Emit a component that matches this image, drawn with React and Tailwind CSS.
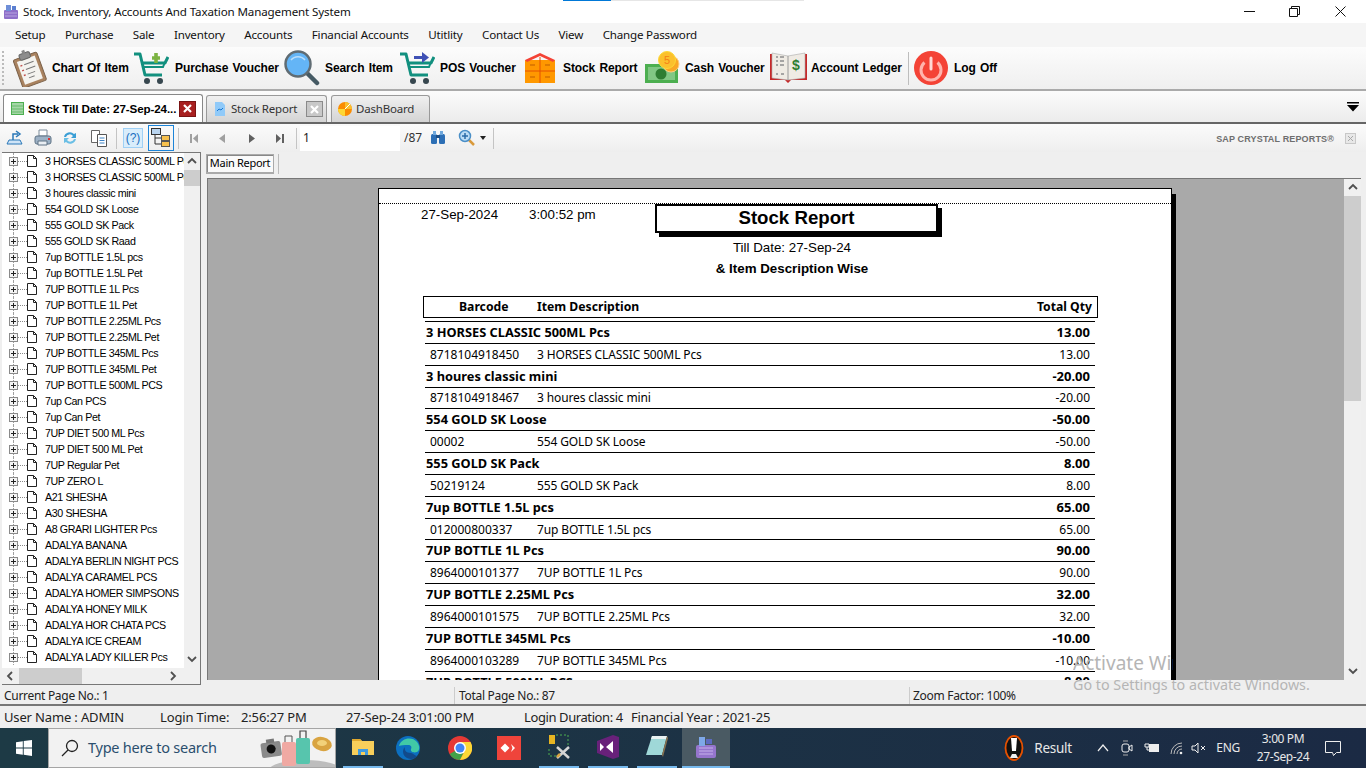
import React from "react";

const Clipboard = () => (
  <svg width="40" height="38" viewBox="0 0 40 38" className="shrink-0">
    <g transform="rotate(-20 20 20)">
      <rect x="7" y="6" width="25" height="30" rx="2" fill="#a9825f" stroke="#7a6048" />
      <rect x="10" y="9" width="19" height="24" fill="#f4f3ef" />
      <rect x="14" y="3" width="11" height="6" rx="1.5" fill="#8d8d8d" stroke="#666" />
      <rect x="18" y="0" width="3" height="4" fill="#888" />
      <path d="M12 14h2M12 19h2M12 24h2" stroke="#c0504d" strokeWidth="1.4" />
      <path d="M16 14h10M16 19h10M16 24h8M16 28h6" stroke="#777" />
    </g>
  </svg>
);
const Cart = ({ kind }) => (
  <svg width="36" height="34" viewBox="0 0 36 34" className="shrink-0">
    <path d="M1 3h6l5 21h17M10 12h22l3-6" fill="none" stroke="#12907f" strokeWidth="3" strokeLinejoin="round" />
    <path d="M9 16h21l2-5" fill="none" stroke="#12907f" strokeWidth="2" />
    <circle cx="14" cy="30" r="3" fill="#37474f" />
    <circle cx="27" cy="30" r="3" fill="#37474f" />
    {kind === "plus" ? (
      <path d="M19 7h8M23 2v10" stroke="#7cb342" strokeWidth="3.6" />
    ) : (
      <g fill="#3f51b5">
        <rect x="15" y="5" width="9" height="3" />
        <path d="M23 1l7 5.500-7 5.500z" />
      </g>
    )}
  </svg>
);
const Magnifier = () => (
  <svg width="36" height="36" viewBox="0 0 36 36" className="shrink-0">
    <path d="M22 22l11 11" stroke="#455a64" strokeWidth="4.500" strokeLinecap="round" />
    <circle cx="14" cy="14" r="12.500" fill="#64b5f6" stroke="#606c73" strokeWidth="2.500" />
    <path d="M7 10a9 9 0 0 1 14 0" fill="none" stroke="#bbdefb" strokeWidth="1.500" />
  </svg>
);
const Box = () => (
  <svg width="30" height="30" viewBox="0 0 30 30" className="shrink-0">
    <rect x="0" y="7" width="30" height="23" fill="#ff9800" />
    <path d="M0 7l15-7 15 7-2 2-13-6L2 9z" fill="#f44336" />
    <path d="M15 4v26M0 18h30" stroke="#e65100" />
    <path d="M5 12h5M20 12h5M5 24h5M20 24h5" stroke="#bf5f00" strokeWidth="1.200" />
  </svg>
);
const Money = () => (
  <svg width="36" height="34" viewBox="0 0 36 34" className="shrink-0">
    <rect x="1" y="13" width="33" height="19" fill="#4caf50" />
    <rect x="4" y="16" width="27" height="13" fill="#81c784" />
    <circle cx="17" cy="23" r="5.500" fill="#2e7d32" />
    <circle cx="27" cy="13" r="8" fill="#f9a825" stroke="#ffcc80" />
    <circle cx="23" cy="9" r="8.500" fill="#fbc02d" stroke="#fdd835" />
    <text x="23" y="13" textAnchor="middle" fontSize="11" fontFamily="Liberation Sans" fill="#f57f17">5</text>
  </svg>
);
const Ledger = () => (
  <svg width="37" height="32" viewBox="0 0 37 32" className="shrink-0">
    <path d="M0 2v26h15l3 3 3-3h16V2h-2v24H2V2z" fill="#c62828" />
    <path d="M2 1l16 3 17-3v25l-17 2-16-2z" fill="#efebe4" stroke="#aaa" strokeWidth=".6" />
    <path d="M18 4v24" stroke="#999" />
    <path d="M6 5h2M6 9h2M6 13h2M6 22h2M10 5h4M10 9h4M10 13h4M11 22h3" stroke="#8d8d8d" strokeWidth="1.400" />
    <text x="26" y="18" textAnchor="middle" fontSize="14" fontWeight="700" fontFamily="Liberation Sans" fill="#2e7d32">$</text>
  </svg>
);
const Power = () => (
  <svg width="34" height="34" viewBox="0 0 34 34" className="shrink-0">
    <circle cx="17" cy="17" r="17" fill="#f44336" />
    <path d="M10.500 11.500a10 10 0 1 0 13 0" fill="none" stroke="#ffb4ad" strokeWidth="3" />
    <path d="M17 7v11" stroke="#ffd8d4" strokeWidth="3" strokeLinecap="round" />
  </svg>
);

const Tool = ({ children, label, cls }) => (
  <div className={`flex items-center ${cls}`}>
    {children}
    <span className="font-bold text-[12px] text-black whitespace-nowrap [word-spacing:1px] tracking-[-0.1px]">{label}</span>
  </div>
);

const DocIcon = () => (
  <svg width="10" height="12" viewBox="0 0 10 12" className="shrink-0">
    <path d="M.5.500h6l3 3v8h-9zM6.500.500v3h3" fill="#fff" stroke="#222" />
  </svg>
);

const PlusBox = () => (
  <svg width="9" height="9" viewBox="0 0 9 9" className="shrink-0">
    <rect x=".5" y=".5" width="8" height="8" fill="#f4f4f4" stroke="#8a8a8a" />
    <path d="M2 4.500h5M4.500 2v5" stroke="#222" />
  </svg>
);

const names = [
  "3 HORSES CLASSIC 500ML Pcs","3 HORSES CLASSIC 500ML Pcs","3 houres classic mini","554 GOLD SK Loose","555 GOLD SK Pack","555 GOLD SK Raad",
  "7up BOTTLE 1.5L pcs","7up BOTTLE 1.5L Pet","7UP BOTTLE 1L Pcs","7UP BOTTLE 1L Pet","7UP BOTTLE 2.25ML Pcs","7UP BOTTLE 2.25ML Pet",
  "7UP BOTTLE 345ML Pcs","7UP BOTTLE 345ML Pet","7UP BOTTLE 500ML PCS","7up Can PCS","7up Can Pet","7UP DIET 500 ML Pcs","7UP DIET 500 ML Pet",
  "7UP Regular Pet","7UP ZERO L","A21 SHESHA","A30 SHESHA","A8 GRARI LIGHTER Pcs","ADALYA BANANA","ADALYA BERLIN NIGHT PCS","ADALYA CARAMEL PCS",
  "ADALYA HOMER SIMPSONS","ADALYA HONEY MILK","ADALYA HOR CHATA PCS","ADALYA ICE CREAM","ADALYA LADY KILLER Pcs",
];

const rows = [
  ["3 HORSES CLASSIC 500ML Pcs","13.00","8718104918450"],
  ["3 houres classic mini","-20.00","8718104918467"],
  ["554 GOLD SK Loose","-50.00","00002"],
  ["555 GOLD SK Pack","8.00","50219124"],
  ["7up BOTTLE 1.5L pcs","65.00","012000800337"],
  ["7UP BOTTLE 1L Pcs","90.00","8964000101377"],
  ["7UP BOTTLE 2.25ML Pcs","32.00","8964000101575"],
  ["7UP BOTTLE 345ML Pcs","-10.00","8964000103289"],
  ["7UP BOTTLE 500ML PCS","8.00","8964000103500"],
];

const Chevron = ({ dir, cls = "" }) => {
  const d = { up: "M1 6l4-4 4 4", down: "M1 2l4 4 4-4", left: "M6 1L2 5l4 4", right: "M2 1l4 4-4 4" }[dir];
  return (
    <svg width="10" height="10" viewBox="0 0 10 10" className={`shrink-0 ${cls}`}>
      <path d={d} fill="none" stroke="#505050" strokeWidth="1.800" />
    </svg>
  );
};

const Sep = ({ cls = "" }) => <div className={`w-px h-[21px] bg-[#c4c4c4] shrink-0 ${cls}`} />;

const CrystalToolbar = () => (
  <div className="h-[28px] shrink-0 flex items-center bg-gradient-to-b from-[#fbfbfb] to-[#eeeeee] text-[12px]">
    <svg width="18" height="18" viewBox="0 0 18 18" className="ml-[6px] shrink-0">
      <path d="M1 15h15l-2-4H3z" fill="#cfe4f7" stroke="#2a78b8" />
      <path d="M7 11V5h5M10 2l4 3-4 3" fill="none" stroke="#2a78b8" strokeWidth="1.500" />
    </svg>
    <svg width="18" height="18" viewBox="0 0 18 18" className="ml-[10px] shrink-0">
      <path d="M5 1h8v6H5z" fill="#fff" stroke="#7a8a99" />
      <rect x="1" y="7" width="16" height="8" rx="2" fill="#9db1c5" stroke="#5f7385" />
      <path d="M4 12h9v4H4z" fill="#e9eef3" stroke="#5f7385" />
      <rect x="14" y="9" width="2" height="2" fill="#d33" />
    </svg>
    <svg width="16" height="16" viewBox="0 0 16 16" className="ml-[10px] shrink-0">
      <path d="M2 7a6 6 0 0 1 10-3l2-1v5H9l2-2a4 4 0 0 0-7 1z" fill="#3b9fd6" />
      <path d="M14 9a6 6 0 0 1-10 3l-2 1V8h5L5 10a4 4 0 0 0 7-1z" fill="#6bbfe5" />
    </svg>
    <svg width="18" height="18" viewBox="0 0 18 18" className="ml-[12px] shrink-0">
      <path d="M1.500 1.500h8v12h-8z" fill="#fff" stroke="#666" />
      <path d="M7.500 5.500h9v12h-9z" fill="#fff" stroke="#555" />
      <path d="M9.500 9h5M9.500 11.500h5M9.500 14h5" stroke="#3d82c4" />
    </svg>
    <Sep cls="ml-[8px]" />
    <div className="ml-[6px] w-[20px] h-[20px] border border-[#9fd0f5] bg-[#d9edfb] flex items-center justify-center text-[12px] text-[#1a6fc0] shrink-0 [font-family:'Liberation_Sans',sans-serif]">(?)</div>
    <div className="ml-[5px] w-[26px] h-[26px] border border-[#1c84d8] flex items-center justify-center shrink-0">
      <svg width="20" height="20" viewBox="0 0 20 20">
        <rect x=".5" y=".5" width="9" height="6" fill="#b9d4ef" stroke="#333" />
        <path d="M4 7v9h6M4 10h6" fill="none" stroke="#333" />
        <rect x="10.500" y="7.500" width="8" height="5" fill="#f6c04d" stroke="#555" />
        <rect x="10.500" y="13.500" width="8" height="5" fill="#f6c04d" stroke="#555" />
      </svg>
    </div>
    <Sep cls="ml-[4px]" />
    <svg width="10" height="11" viewBox="0 0 10 11" className="ml-[10px] shrink-0"><path d="M1 1h2v9H1zM9 1v9L4 5.500z" fill="#a0a0a0" /></svg>
    <svg width="6" height="11" viewBox="0 0 6 11" className="ml-[20px] shrink-0"><path d="M6 1v9L0 5.500z" fill="#a0a0a0" /></svg>
    <svg width="6" height="11" viewBox="0 0 6 11" className="ml-[24px] shrink-0"><path d="M0 1v9l6-4.500z" fill="#606060" /></svg>
    <svg width="8" height="11" viewBox="0 0 8 11" className="ml-[21px] shrink-0"><path d="M0 1v9l5-4.500zM6 1h2v9H6z" fill="#606060" /></svg>
    <Sep cls="ml-[12px]" />
    <div className="ml-[3px] w-[100px] h-[25px] bg-white flex items-center pl-[3px] text-[#222] shrink-0">1</div>
    <span className="ml-[4px] text-[#333] text-[12px]">/87</span>
    <svg width="16" height="14" viewBox="0 0 16 14" className="ml-[8px] shrink-0">
      <rect x="1" y="3" width="6" height="10" rx="1.500" fill="#2d6fb5" />
      <rect x="9" y="3" width="6" height="10" rx="1.500" fill="#2d6fb5" />
      <rect x="3" y="0" width="3" height="4" fill="#6fa8dc" />
      <rect x="10" y="0" width="3" height="4" fill="#6fa8dc" />
      <rect x="6" y="4" width="4" height="3" fill="#1c4f87" />
    </svg>
    <svg width="18" height="18" viewBox="0 0 18 18" className="ml-[12px] shrink-0">
      <path d="M10 10l6 6" stroke="#d99a3c" strokeWidth="2.500" />
      <circle cx="7" cy="7" r="5.500" fill="#bcdcf5" stroke="#4a8fc7" strokeWidth="1.500" />
      <path d="M4 7h6M7 4v6" stroke="#2b6ca8" strokeWidth="1.500" />
    </svg>
    <svg width="6" height="4" viewBox="0 0 6 4" className="ml-[4px] shrink-0"><path d="M0 0h6L3 4z" fill="#222" /></svg>
    <Sep cls="ml-[7px]" />
    <div className="ml-auto flex items-center">
      <span className="mt-[3px] text-[9px] font-bold text-[#6e6e6e] tracking-[0.15px] whitespace-nowrap [font-family:'Liberation_Sans',sans-serif]">SAP CRYSTAL REPORTS®</span>
      <div className="ml-[11px] mr-[10px] w-[11px] h-[11px] border border-[#c8c8c8] bg-[#e8e8e8] flex items-center justify-center">
        <svg width="7" height="7" viewBox="0 0 7 7"><path d="M1 1l5 5M6 1L1 6" stroke="#a8a8a8" /></svg>
      </div>
    </div>
  </div>
);

const TreeRow = ({ name }) => (
  <div className="h-[16px] flex items-center pl-[7px] relative whitespace-nowrap">
    <span className="absolute left-[11px] top-0 bottom-0 border-l border-dotted border-[#a0a0a0]" />
    <span className="relative flex items-center">
      <PlusBox />
      <span className="w-[9px] border-t border-dotted border-[#888]" />
      <DocIcon />
    </span>
    <span className="ml-[8px] text-[10.7px] text-black tracking-[-0.4px]">{name}</span>
  </div>
);

const Tree = () => (
  <div className="w-[199px] ml-[2px] h-[533px] shrink-0 border-r border-b border-t border-[#777] flex flex-col bg-white [font-family:'Liberation_Sans',sans-serif]">
    <div className="flex-1 flex min-h-0">
      <div className="flex-1 overflow-hidden min-w-0">{names.map((n, i) => <TreeRow key={i} name={n} />)}</div>
      <div className="w-[16px] bg-[#f0f0f0] flex flex-col items-center shrink-0">
        <div className="h-[17px] flex items-center justify-center"><Chevron dir="up" /></div>
        <div className="h-[16px] w-full bg-[#cdcdcd]" />
        <div className="flex-1" />
        <div className="h-[17px] flex items-center justify-center"><Chevron dir="down" /></div>
      </div>
    </div>
    <div className="h-[16px] bg-[#f0f0f0] flex items-center shrink-0">
      <div className="w-[17px] flex justify-center"><Chevron dir="left" /></div>
      <div className="w-[63px] h-full bg-[#cdcdcd]" />
      <div className="flex-1" />
      <div className="w-[32px] flex justify-start pl-[1px]"><Chevron dir="right" /></div>
    </div>
  </div>
);

const Report = () => (
  <div className="ml-[170px] mt-[9px] w-[794px] shrink-0 relative bg-white border-t border-l border-r border-black">
    <div className="absolute -right-[5px] top-[5px] bottom-0 w-[4px] bg-black" />
    <div className="h-[15px] border-b border-dotted border-black" />
    <div className="flex items-start pl-[42px] text-[13.33px] text-black leading-[18px] [font-family:'Liberation_Sans',sans-serif]">
      <span className="mt-[2px] w-[108px]">27-Sep-2024</span>
      <span className="mt-[2px] w-[126px]">3:00:52 pm</span>
      <div className="w-[283px] h-[29px] border-2 border-black shadow-[4px_4px_0_#000] bg-white flex items-center justify-center text-[18.67px] font-bold leading-none">Stock Report</div>
    </div>
    <div className="text-center pl-[34px] mt-[6px] text-[13.33px] leading-[18px] [font-family:'Liberation_Sans',sans-serif]">Till Date: 27-Sep-24</div>
    <div className="text-center pl-[34px] mt-[3px] text-[13.33px] leading-[18px] font-bold [font-family:'Liberation_Sans',sans-serif]">&amp; Item Description Wise</div>
    <div className="ml-[44px] w-[675px] mt-[18px] h-[22px] pt-[1px] border border-black flex items-center text-[12.2px] font-bold [font-family:'Noto_Sans',sans-serif] text-black">
      <span className="ml-[35px] w-[78px]">Barcode</span>
      <span>Item Description</span>
      <span className="ml-auto mr-[5px]">Total Qty</span>
    </div>
    <div className="ml-[46px] w-[670px] mt-[3px] [font-family:'Noto_Sans',sans-serif] text-black">
      {rows.map((r, i) => (
        <React.Fragment key={i}>
          <div className="h-[21.85px] border-t border-black flex items-center text-[12.8px] font-bold leading-none">
            <span className="ml-[1px]">{r[0]}</span>
            <span className="ml-auto mr-[5px] text-[13px]">{r[1]}</span>
          </div>
          <div className="h-[21.85px] pt-[1px] border-t border-black flex items-center text-[12px] leading-none">
            <span className="ml-[5px] w-[107px]">{r[2]}</span>
            <span className="tracking-[-0.12px]">{r[0]}</span>
            <span className="ml-auto mr-[5px]">{r[1]}</span>
          </div>
        </React.Fragment>
      ))}
    </div>
  </div>
);

const Viewer = () => (
  <div className="flex-1 min-w-0 flex flex-col ml-[6px] mr-[5px]">
    <div className="h-[26px] shrink-0 flex items-start pt-[2px] -ml-[1px]">
      <div className="h-[20px] w-[68px] border border-[#aaa] border-b-2 bg-[#fafafa] text-[11px] text-black flex items-center justify-center whitespace-nowrap [font-family:'Noto_Sans',sans-serif] tracking-[-0.3px] shadow-[inset_1px_1px_0_#888]">Main Report</div>
      <div className="ml-[4px] w-px h-[20px] bg-[#bbb]" />
    </div>
    <div className="h-[502px] shrink-0 flex border-t border-l border-[#777] bg-[#a9a9a9] overflow-hidden">
      <div className="flex-1 min-w-0 overflow-hidden"><Report /></div>
      <div className="w-[17px] shrink-0 bg-[#f0f0f0] flex flex-col items-center">
        <div className="h-[17px] flex items-center justify-center"><Chevron dir="up" /></div>
        <div className="h-[205px] w-full bg-[#cdcdcd]" />
        <div className="flex-1" />
        <div className="h-[17px] flex items-center justify-center"><Chevron dir="down" /></div>
      </div>
    </div>
  </div>
);

const Taskbar = () => (
  <div className="h-[40px] shrink-0 flex items-stretch bg-gradient-to-r from-[#1d3a45] to-[#1b2a44] text-white relative [font-family:'Noto_Sans',sans-serif]">
    <div className="w-[48px] flex items-center justify-center shrink-0">
      <svg width="16" height="16" viewBox="0 0 16 16"><path d="M0 2.200l6.800-1v6.300H0zM7.700 1.100L16 0v7.500H7.700zM0 8.400h6.800v6.400l-6.800-1zM7.700 8.400H16V16l-8.300-1.200z" fill="#fff" /></svg>
    </div>
    <div className="w-[288px] bg-[#f2f2f2] border border-[#a5a5a5] flex items-center shrink-0 relative overflow-hidden">
      <svg width="18" height="18" viewBox="0 0 18 18" className="ml-[12px]"><circle cx="11" cy="7" r="5.500" fill="none" stroke="#222" strokeWidth="1.300" /><path d="M7 11l-6 6" stroke="#222" strokeWidth="1.300" /></svg>
      <span className="ml-[9px] text-[14.5px] text-[#2b4f6e] whitespace-nowrap tracking-[-0.25px]">Type here to search</span>
      <svg width="76" height="38" viewBox="0 0 76 38" className="absolute right-0 top-0">
        <ellipse cx="46" cy="41" rx="36" ry="10" fill="#bdbdbd" />
        <g transform="rotate(-8 12 19)"><rect x="2" y="13" width="20" height="15" rx="2" fill="#8a8a8a" /><rect x="8" y="10" width="8" height="4" fill="#777" /><circle cx="12" cy="20" r="4.500" fill="#111" /></g>
        <rect x="23" y="13" width="14" height="24" rx="2" fill="#f0a9a3" /><path d="M26 13V7h7v6" fill="none" stroke="#555" />
        <rect x="37" y="9" width="14" height="26" rx="2" fill="#57c5ad" /><path d="M41 9V2h6v7" fill="none" stroke="#444" strokeWidth="1.200" />
        <ellipse cx="63" cy="15" rx="10" ry="7" fill="#d9a441" transform="rotate(12 63 15)" /><ellipse cx="63" cy="14" rx="5" ry="3" fill="#f2d27a" />
      </svg>
    </div>
    <div className="w-[40px] ml-[7px] flex items-center justify-center border-b-[2px] border-[#76b9ed] shrink-0">
      <svg width="24" height="20" viewBox="0 0 24 20"><path d="M1 2h8l2 2h12v14H1z" fill="#f7cf5b" /><path d="M1 2h8l2 2H1z" fill="#e0a92e" /><path d="M7 18v-6h10v6h-3v-3h-4v3z" fill="#3f9be0" /></svg>
    </div>
    <div className="w-[49px] flex items-center justify-center shrink-0">
      <svg width="24" height="24" viewBox="0 0 24 24"><circle cx="12" cy="12" r="12" fill="#0c6fc0" /><path d="M3 10C5 2 16 0 21 6c3 4 3 8 0 10-3 1-7 0-6-3 1-2 0-4-3-4-4 0-7 0-9 1z" fill="#41c9a6" /><path d="M15 17c-5 0-7-3-6-6-4 3-2 12 6 12 3 0 5-1 6-3-2 0-4-3-6-3z" fill="#124a8a" /></svg>
    </div>
    <div className="w-[55px] flex items-center justify-center shrink-0">
      <svg width="24" height="24" viewBox="0 0 24 24"><circle cx="12" cy="12" r="12" fill="#e53935" /><path d="M12 12L1.700 18A12 12 0 0 0 12 24L18 12z" fill="#43a047" /><path d="M12 6h10.500A12 12 0 0 1 12 24L18 12z" fill="#fdd835" /><circle cx="12" cy="12" r="6" fill="#fff" /><circle cx="12" cy="12" r="4.500" fill="#4285f4" /></svg>
    </div>
    <div className="w-[44px] flex items-center justify-center shrink-0">
      <svg width="24" height="24" viewBox="0 0 24 24"><rect width="24" height="24" fill="#ef443b" /><path d="M8 7.500L12.500 12 8 16.500 3.500 12z" fill="#fff" /><path d="M14 8l4 4-4 4 1.500-4z" fill="#fff" /></svg>
    </div>
    <div className="w-[40px] ml-[8px] flex items-center justify-center border-b-[2px] border-[#76b9ed] shrink-0">
      <svg width="24" height="26" viewBox="0 0 24 26"><rect x="2" y="1" width="6" height="9" fill="#e6b422" /><path d="M9 1h12v12M2 15v7h8" fill="none" stroke="#4caf50" strokeDasharray="2 2" /><path d="M10 13l12 11M22 13L10 24" stroke="#d5d5d5" strokeWidth="2.500" /><path d="M10 23l3-3" stroke="#d9a441" strokeWidth="2.500" /></svg>
    </div>
    <div className="w-[40px] ml-[9px] flex items-center justify-center border-b-[2px] border-[#76b9ed] shrink-0">
      <svg width="22" height="24" viewBox="0 0 22 24"><path d="M0 6l16-6 6 2v20l-6 2-16-6z" fill="#68217a" /><path d="M3 8l4 4-4 4zM16 6v12l-7-6z" fill="#fff" /></svg>
    </div>
    <div className="w-[40px] ml-[9px] flex items-center justify-center border-b-[2px] border-[#76b9ed] shrink-0">
      <svg width="24" height="24" viewBox="0 0 24 24"><path d="M7 1h15l-5 19H1z" fill="#9fd8d8" /><path d="M7 1h15l-1 3H6z" fill="#e9f2f2" /><path d="M22 1l1 2-5 19-1-2z" fill="#8a7350" /></svg>
    </div>
    <div className="w-[48px] ml-[5px] bg-[#4a5a63] flex items-center justify-center border-b-[2px] border-[#76b9ed] shrink-0">
      <svg width="20" height="24" viewBox="0 0 20 24"><rect x="0" y="10" width="20" height="13" rx="2" fill="#9575cd" /><rect x="3" y="2" width="6" height="9" fill="#7ea8e8" /><rect x="10" y="4" width="6" height="5" fill="#5c6bc0" /><path d="M3 13h14M3 16h14M3 19h14" stroke="#c5b3ea" /></svg>
    </div>
    <div className="ml-auto flex items-center text-[12px] text-[#e8e8e8] shrink-0">
      <svg width="20" height="28" viewBox="0 0 20 28" className="mr-[10px]"><ellipse cx="10" cy="14" rx="8.500" ry="12" fill="#111" stroke="#e65100" strokeWidth="1.800" /><path d="M7 4h6l-1 13H8z" fill="#fff" /><path d="M6 24h8l-2-4H8z" fill="#eee" /></svg>
      <span className="text-[13.5px] w-[37px] tracking-[-0.3px]">Result</span>
      <svg width="12" height="8" viewBox="0 0 12 8" className="ml-[26px]"><path d="M1 7l5-6 5 6" fill="none" stroke="#eee" strokeWidth="1.200" /></svg>
      <svg width="12" height="16" viewBox="0 0 12 16" className="ml-[12px]"><rect x="1" y="4" width="7" height="8" rx="2" fill="none" stroke="#eee" /><path d="M8 7l3-2v6l-3-2z" fill="none" stroke="#eee" /><path d="M2 1h5M2 15h5" stroke="#aaa" /></svg>
      <svg width="16" height="12" viewBox="0 0 16 12" className="ml-[11px]"><rect x="5" y="2" width="10" height="8" fill="#eee" /><path d="M1 2h4v3H1zM3 5v3h2" fill="none" stroke="#eee" /></svg>
      <svg width="14" height="13" viewBox="0 0 14 13" className="ml-[10px]"><path d="M1 12a11 11 0 0 1 11-11M4 12a8 8 0 0 1 8-8M7 12a5 5 0 0 1 5-5" fill="none" stroke="#bbb" /><circle cx="11" cy="11" r="1.300" fill="#eee" /></svg>
      <svg width="16" height="14" viewBox="0 0 16 14" className="ml-[7px]"><path d="M1 5h3l3-3v10L4 9H1z" fill="none" stroke="#eee" /><path d="M10 5l4 4M14 5l-4 4" stroke="#eee" /></svg>
      <span className="ml-[9px] text-[12px] tracking-[-0.3px]">ENG</span>
      <div className="ml-[15px] w-[56px] flex flex-col items-center text-[12px] leading-[18px] tracking-[-0.4px] whitespace-nowrap"><span>3:00 PM</span><span>27-Sep-24</span></div>
      <svg width="18" height="18" viewBox="0 0 18 18" className="ml-[13px] mr-[24px]"><path d="M1.500 2.500h15v11h-4l-3 3-1-3h-7z" fill="none" stroke="#eee" /></svg>
    </div>
  </div>
);

export default function App() {
  const menus = ["Setup", "Purchase", "Sale", "Inventory", "Accounts", "Financial Accounts", "Utitlity", "Contact Us", "View", "Change Password"];
  return (
    <div className="w-[1366px] h-[768px] overflow-hidden flex flex-col bg-[#efefef] relative text-black [font-family:'Noto_Sans',sans-serif]">
      <div className="h-[23px] shrink-0 bg-white flex items-center relative">
        <div className="absolute top-0 left-[563px] w-[241px] h-px bg-[#e6e6e6]"><div className="w-[48px] h-px bg-[#0078d7]" /></div>
        <svg width="16" height="16" viewBox="0 0 16 16" className="ml-[3px] shrink-0"><rect x="1" y="6" width="14" height="9" rx="1" fill="#8e6fc9" /><rect x="3" y="1" width="5" height="6" fill="#6f8fd8" /><rect x="9" y="2" width="4" height="4" fill="#5b7fd0" /><path d="M2 9h12M2 12h12" stroke="#b7a5e0" /></svg>
        <span className="ml-[4px] text-[11.6px] tracking-[-0.14px] whitespace-nowrap text-[#111]">Stock, Inventory, Accounts And Taxation Management System</span>
        <div className="ml-auto flex items-center shrink-0">
          <svg width="11" height="11" viewBox="0 0 11 11"><path d="M0 5.500h11" stroke="#111" /></svg>
          <svg width="11" height="11" viewBox="0 0 11 11" className="ml-[34px]"><path d="M.5 2.500h8v8h-8zM2.500 2.500v-2h8v8h-2" fill="none" stroke="#111" /></svg>
          <svg width="11" height="11" viewBox="0 0 11 11" className="ml-[35px] mr-[20px]"><path d="M.5.500l10 10M10.500.500l-10 10" stroke="#111" /></svg>
        </div>
      </div>
      <div className="h-[24px] shrink-0 flex items-center gap-[19.5px] pl-[15px] bg-[#f5f5f5] text-[11.6px] text-[#111] whitespace-nowrap tracking-[-0.2px]">
        {menus.map((m) => <span key={m}>{m}</span>)}
      </div>
      <div className="h-[44px] shrink-0 bg-gradient-to-b from-[#fcfcfc] to-[#efefef] border-b-2 border-[#aaaaaa] flex items-center [font-family:'Liberation_Sans',sans-serif]">
        <div className="ml-[2px] h-[34px] border-l-2 border-dotted border-[#bbb]" />
        <Tool label="Chart Of Item" cls="ml-[6px] gap-[2px] w-[123px]"><Clipboard /></Tool>
        <Tool label="Purchase Voucher" cls="gap-[6px] w-[151px]"><Cart kind="plus" /></Tool>
        <Tool label="Search Item" cls="gap-[5px] w-[115px]"><Magnifier /></Tool>
        <Tool label="POS Voucher" cls="gap-[5px] w-[126px]"><Cart kind="arrow" /></Tool>
        <Tool label="Stock Report" cls="gap-[8px] w-[119px]"><Box /></Tool>
        <Tool label="Cash Voucher" cls="gap-[5px] w-[126px]"><Money /></Tool>
        <Tool label="Account Ledger" cls="gap-[4px] w-[138px]"><Ledger /></Tool>
        <div className="w-px h-[33px] bg-[#bdbdbd] shrink-0 mr-[5px]" />
        <Tool label="Log Off" cls="gap-[6px]"><Power /></Tool>
      </div>
      <div className="h-[33px] shrink-0 border-b-2 border-[#666] bg-gradient-to-b from-[#fbfbfb] to-[#ececec] flex items-end relative text-[12px]">
        <div className="ml-[3px] w-[200px] h-[28px] bg-white border border-b-0 border-[#888] rounded-t-[3px] flex items-center font-bold text-black whitespace-nowrap text-[11.6px] [font-family:'Liberation_Sans',sans-serif]">
          <svg width="13" height="13" viewBox="0 0 13 13" className="ml-[7px] shrink-0"><rect x=".5" y=".5" width="12" height="12" fill="#a5d6a7" stroke="#4caf50" /><path d="M1 4h11M1 7h11M1 10h11" stroke="#66bb6a" /></svg>
          <span className="ml-[4px] w-[151px] tracking-[-0.1px]">Stock Till Date: 27-Sep-24...</span>
          <span className="w-[17px] h-[16px] bg-[#a82020] border border-[#7a1414] flex items-center justify-center"><svg width="9" height="9" viewBox="0 0 9 9"><path d="M1 1l7 7M8 1L1 8" stroke="#fff" strokeWidth="2.200" /></svg></span>
        </div>
        <div className="ml-[3px] w-[121px] h-[27px] bg-gradient-to-b from-[#f0f0f0] to-[#d4d4d4] border border-b-0 border-[#999] rounded-t-[3px] flex items-center text-[#333] whitespace-nowrap text-[11.5px] tracking-[-0.2px]">
          <svg width="12" height="14" viewBox="0 0 12 14" className="ml-[7px] shrink-0"><path d="M1 0h7l3 3v11H1z" fill="#90caf9" /><path d="M3 9l2-2 2 1 2-2" fill="none" stroke="#1976d2" /></svg>
          <span className="ml-[5px] w-[75px]">Stock Report</span>
          <span className="w-[17px] h-[16px] bg-[#c8c8c8] border border-[#8a8a8a] flex items-center justify-center"><svg width="9" height="9" viewBox="0 0 9 9"><path d="M1 1l7 7M8 1L1 8" stroke="#fff" strokeWidth="2.200" /></svg></span>
        </div>
        <div className="ml-[4px] w-[99px] h-[27px] bg-gradient-to-b from-[#f0f0f0] to-[#d4d4d4] border border-b-0 border-[#999] rounded-t-[3px] flex items-center text-[#333] whitespace-nowrap text-[11.5px] tracking-[-0.2px]">
          <svg width="14" height="14" viewBox="0 0 14 14" className="ml-[6px] shrink-0"><circle cx="7" cy="7" r="7" fill="#fb8c00" /><path d="M7 7V0a7 7 0 0 1 7 7z" fill="#fbc02d" /><path d="M7 7H0a7 7 0 0 0 7 7z" fill="#fdd835" /><path d="M7 7l5-5" stroke="#fff" /></svg>
          <span className="ml-[4px]">DashBoard</span>
        </div>
        <svg width="12" height="10" viewBox="0 0 12 10" className="absolute right-[7px] top-[11px]"><path d="M0 0h12v1.500H0zM0 3h12L6 9.500z" fill="#000" /></svg>
      </div>
      <CrystalToolbar />
      <div className="flex-1 min-h-0 flex items-start">
        <Tree />
        <Viewer />
      </div>
      <div className="h-[21px] pt-[2px] shrink-0 border-b-2 border-[#777] flex items-center text-[12px] text-[#222] whitespace-nowrap tracking-[-0.3px]">
        <span className="pl-[4px] w-[455px] border-r border-[#ccc] h-full flex items-center">Current Page No.: 1</span>
        <span className="pl-[4px] w-[455px] border-r border-[#ccc] h-full flex items-center">Total Page No.: 87</span>
        <span className="pl-[3px]">Zoom Factor: 100%</span>
      </div>
      <div className="h-[22px] pt-[2px] shrink-0 flex items-center text-[13px] text-[#222] whitespace-nowrap tracking-[-0.15px]">
        <span className="ml-[4px] w-[156px]">User Name : ADMIN</span>
        <span className="w-[81px]">Login Time:</span>
        <span className="w-[105px]">2:56:27 PM</span>
        <span className="w-[178px]">27-Sep-24 3:01:00 PM</span>
        <span className="w-[107px] tracking-[-0.4px]">Login Duration: 4</span>
        <span>Financial Year : 2021-25</span>
      </div>
      <Taskbar />
      <div className="absolute left-[1073px] top-[649px] w-[100px] overflow-hidden text-[19px] text-[#b5b5b5] whitespace-nowrap">Activate Windows</div>
      <div className="absolute left-[1073px] top-[674px] text-[14.3px] text-[#b5b5b5] whitespace-nowrap">Go to Settings to activate Windows.</div>
    </div>
  );
}
